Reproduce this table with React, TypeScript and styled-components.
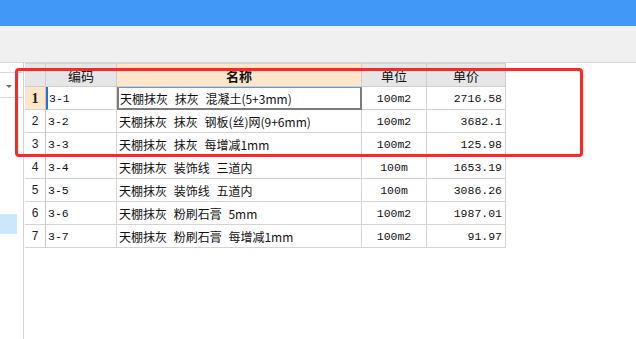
import { Fragment } from "react";
import styled, { createGlobalStyle } from "styled-components";

const GlobalStyle = createGlobalStyle`
  html, body {
    margin: 0;
    padding: 0;
    background: #ffffff;
    font-family: "Noto Sans CJK SC", "Liberation Sans", sans-serif;
  }
`;

const Page = styled.div`
  position: relative;
  width: 636px;
  height: 339px;
  overflow: hidden;
  display: flex;
  flex-direction: column;
`;

const TitleBar = styled.div`
  height: 26px;
  background: #4198f6;
`;

const Toolbar = styled.div`
  height: 36px;
  background: #f0f0f0;
  border-bottom: 1px solid #d6d6d6;
`;

const Main = styled.div`
  flex: 1;
  display: flex;
`;

const SidePanel = styled.div`
  width: 23px;
  border-right: 1px solid #d2d2d2;
  display: flex;
  flex-direction: column;
`;

const SideRow = styled.div<{ $h: number }>`
  height: ${(p) => p.$h}px;
  border-bottom: 1px solid #d8d8d8;
  display: flex;
  align-items: center;
  justify-content: flex-end;
  padding-right: 11px;
  box-sizing: border-box;
`;

const Arrow = styled.span`
  width: 0;
  height: 0;
  border-left: 3px solid transparent;
  border-right: 3px solid transparent;
  border-top: 3px solid #707070;
  margin-top: 2px;
`;

const SideSelected = styled.div`
  margin-top: 116px;
  width: 17px;
  height: 20px;
  background: #cce6fb;
`;

const GridArea = styled.div`
  padding-left: 1px;
`;

const Grid = styled.div`
  display: grid;
  grid-template-columns: 21px 71px 245px 65px 79px;
  grid-template-rows: 24px repeat(7, 23px);
`;

const HeadCell = styled.div<{ $active?: boolean }>`
  box-sizing: border-box;
  background: ${(p) => (p.$active ? "#fde6c9" : "#e6e6e6")};
  border-right: 1px solid #cdcdcd;
  border-bottom: 1px solid #cdcdcd;
  border-top: 1px solid #d4d4d4;
  display: flex;
  align-items: center;
  justify-content: center;
  font-size: 13px;
  font-weight: ${(p) => (p.$active ? 700 : 400)};
  color: #111;
`;

const RowNum = styled.div<{ $active?: boolean }>`
  box-sizing: border-box;
  background: ${(p) => (p.$active ? "#fde6c9" : "#ffffff")};
  border-right: 1px solid #c6c6c6;
  border-bottom: 1px solid #d4d4d4;
  display: flex;
  align-items: center;
  justify-content: center;
  font-family: ${(p) =>
    p.$active ? '"Liberation Serif", serif' : '"Liberation Mono", monospace'};
  font-size: ${(p) => (p.$active ? "14px" : "12px")};
  font-weight: ${(p) => (p.$active ? 700 : 400)};
  color: #222;
  padding-top: 2px;
`;

const Cell = styled.div<{ $align?: "left" | "center" | "right"; $mono?: boolean; $marker?: boolean; $focus?: boolean }>`
  box-sizing: border-box;
  border-right: 1px solid #d4d4d4;
  border-bottom: 1px solid #d4d4d4;
  display: flex;
  align-items: center;
  justify-content: ${(p) =>
    p.$align === "right" ? "flex-end" : p.$align === "center" ? "center" : "flex-start"};
  padding: ${(p) => (p.$align === "right" ? "0 3px 0 0" : p.$align === "center" ? "0" : "0 0 0 2px")};
  font-family: ${(p) =>
    p.$mono
      ? '"Liberation Mono", "Noto Sans CJK SC", monospace'
      : '"Noto Sans CJK SC", "Liberation Sans", sans-serif'};
  font-size: ${(p) => (p.$mono ? "11.5px" : "12px")};
  word-spacing: ${(p) => (p.$mono ? "0" : "4px")};
  color: #111;
  white-space: nowrap;
  ${(p) => (p.$marker ? "border-left: 2px solid #1a73e8; padding-left: 1px;" : "")}
  ${(p) =>
    p.$focus
      ? "border: 2px solid #7c7c7c; border-top: 1px solid #5a9be6; padding-left: 1px;"
      : ""}
`;

const Highlight = styled.div`
  position: absolute;
  left: 15px;
  top: 68px;
  width: 568px;
  height: 89px;
  box-sizing: border-box;
  border: 3px solid #fa2a22;
  border-radius: 4px;
  pointer-events: none;
`;

const rows = [
  { code: "3-1", name: "天棚抹灰 抹灰 混凝土(5+3mm)", unit: "100m2", price: "2716.58" },
  { code: "3-2", name: "天棚抹灰 抹灰 钢板(丝)网(9+6mm)", unit: "100m2", price: "3682.1" },
  { code: "3-3", name: "天棚抹灰 抹灰 每增减1mm", unit: "100m2", price: "125.98" },
  { code: "3-4", name: "天棚抹灰 装饰线 三道内", unit: "100m", price: "1653.19" },
  { code: "3-5", name: "天棚抹灰 装饰线 五道内", unit: "100m", price: "3086.26" },
  { code: "3-6", name: "天棚抹灰 粉刷石膏 5mm", unit: "100m2", price: "1987.01" },
  { code: "3-7", name: "天棚抹灰 粉刷石膏 每增减1mm", unit: "100m2", price: "91.97" },
];

export default function App() {
  return (
    <Page>
      <GlobalStyle />
      <TitleBar />
      <Toolbar />
      <Main>
        <SidePanel>
          <SideRow $h={10} />
          <SideRow $h={25}>
            <Arrow />
          </SideRow>
          <SideSelected />
        </SidePanel>
        <GridArea>
          <Grid>
            <HeadCell />
            <HeadCell>编码</HeadCell>
            <HeadCell $active>名称</HeadCell>
            <HeadCell>单位</HeadCell>
            <HeadCell>单价</HeadCell>
            {rows.map((r, i) => (
              <Fragment key={r.code}>
                <RowNum $active={i === 0}>{i + 1}</RowNum>
                <Cell $mono $marker={i === 0}>
                  {r.code}
                </Cell>
                <Cell $focus={i === 0}>{r.name}</Cell>
                <Cell $mono $align="center">
                  {r.unit}
                </Cell>
                <Cell $mono $align="right">
                  {r.price}
                </Cell>
              </Fragment>
            ))}
          </Grid>
        </GridArea>
      </Main>
      <Highlight />
    </Page>
  );
}
